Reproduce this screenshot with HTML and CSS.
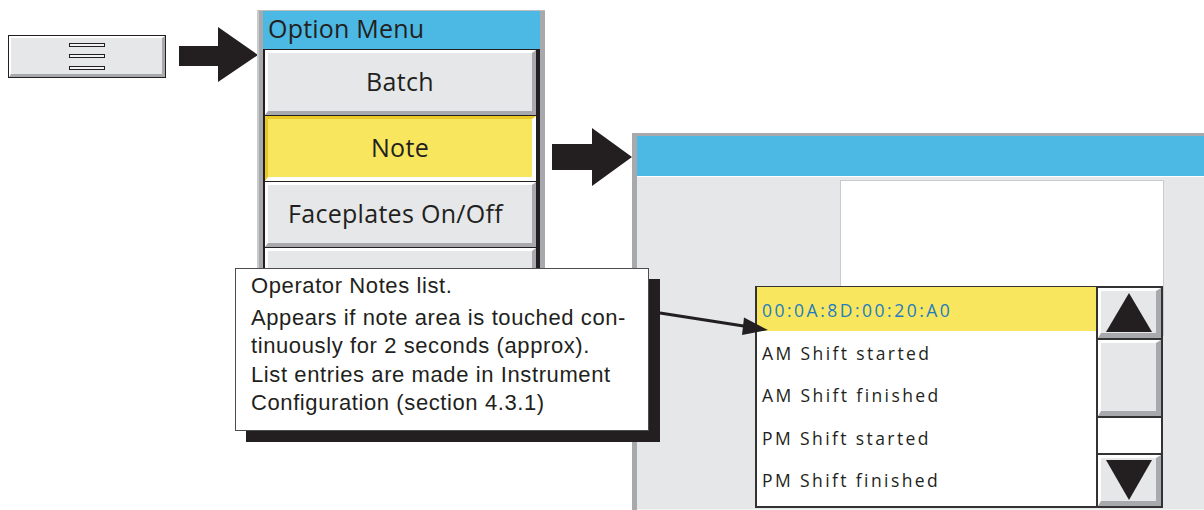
FILE: index.html
```html
<!DOCTYPE html>
<html lang="en">
<head>
<meta charset="utf-8">
<title>Operator Notes list</title>
<link rel="stylesheet" href="styles.css">
</head>
<body>
<div class="canvas">

  <div class="key">
    <div class="key-face">
      <span class="bar"></span><span class="bar"></span><span class="bar"></span>
    </div>
  </div>

  <svg class="arrow arrow-one" viewBox="0 0 79 55" aria-hidden="true">
    <polygon points="0,19 39,19 39,0 79,28 39,55 39,39 0,39"/>
  </svg>

  <div class="menu">
    <div class="menu-title">Option Menu</div>
    <div class="menu-list">
      <div class="menu-btn">Batch</div>
      <div class="menu-btn pressed">Note</div>
      <div class="menu-btn wide">Faceplates On/Off</div>
      <div class="menu-btn"></div>
    </div>
  </div>

  <svg class="arrow arrow-two" viewBox="0 0 80 58" aria-hidden="true">
    <polygon points="0,16 40,16 40,0 80,29 40,58 40,42 0,42"/>
  </svg>

  <div class="window">
    <div class="window-head"></div>
    <div class="window-body">
      <div class="note-area"></div>
      <div class="notes-list">
        <div class="notes-items">
          <div class="note-row selected">00:0A:8D:00:20:A0</div>
          <div class="note-row">AM Shift started</div>
          <div class="note-row">AM Shift finished</div>
          <div class="note-row">PM Shift started</div>
          <div class="note-row">PM Shift finished</div>
        </div>
        <div class="scroller">
          <div class="scroll-btn up">
            <svg viewBox="0 0 46 39"><polygon points="23,0 46,39 0,39"/></svg>
          </div>
          <div class="scroll-thumb"></div>
          <div class="scroll-track"></div>
          <div class="scroll-btn down">
            <svg viewBox="0 0 46 40"><polygon points="0,0 46,0 23,40"/></svg>
          </div>
        </div>
      </div>
    </div>
  </div>

  <div class="callout">
    <p class="callout-title">Operator Notes list.</p>
    <p>Appears if note area is touched con-</p>
    <p>tinuously for 2 seconds (approx).</p>
    <p>List entries are made in Instrument</p>
    <p>Configuration (section 4.3.1)</p>
  </div>

  <svg class="connector" viewBox="0 0 1204 510" aria-hidden="true">
    <line x1="660" y1="313" x2="750" y2="327" />
    <polygon points="768,330 744,317.5 742,335"/>
  </svg>

</div>
</body>
</html>
```

FILE: styles.css
```css
* { box-sizing: border-box; }

html, body {
  margin: 0;
  padding: 0;
  background: #ffffff;
}

.canvas {
  position: relative;
  width: 1204px;
  height: 510px;
  overflow: hidden;
  background: #ffffff;
  font-family: "Open Sans", "Noto Sans", sans-serif;
  color: #231f20;
}

/* ---------- left menu key ---------- */
.key {
  position: absolute;
  left: 8px;
  top: 35px;
  width: 158px;
  height: 43px;
  border: 1px solid #231f20;
}
.key-face {
  height: 100%;
  background: #e6e7e8;
  border-style: solid;
  border-width: 2px 3px 3px 2px;
  border-color: #ffffff #a7a9ac #a7a9ac #ffffff;
  display: flex;
  flex-direction: column;
  align-items: center;
  justify-content: center;
  gap: 7.5px;
}
.bar {
  display: block;
  width: 36px;
  height: 4px;
  border: 1px solid #231f20;
  background: #f2f2f2;
}

/* ---------- arrows ---------- */
.arrow {
  position: absolute;
  fill: #231f20;
}
.arrow-one {
  left: 179px;
  top: 27px;
  width: 79px;
  height: 55px;
}
.arrow-two {
  left: 552px;
  top: 128px;
  width: 80px;
  height: 58px;
}

/* ---------- option menu ---------- */
.menu {
  position: absolute;
  left: 257px;
  top: 10px;
  width: 288px;
  height: 275px;
  background: #a7a9ac;
  border-left: 2px solid #c9cacc;
  border-top: 1px solid #bcbec0;
  padding: 0 5px 0 4px;
  display: flex;
  flex-direction: column;
}
.menu-title {
  flex: none;
  height: 38px;
  background: #4cb8e4;
  font-size: 25px;
  line-height: 34px;
  padding-left: 5px;
  color: #231f20;
  letter-spacing: 0.2px;
}
.menu-list {
  flex: 1;
  min-height: 0;
  overflow: hidden;
  background: #231f20;
  padding: 1px 4px 0 2px;
  display: flex;
  flex-direction: column;
  gap: 1px;
}
.menu-btn {
  height: 65px;
  flex: none;
  background: #e6e7e8;
  border-style: solid;
  border-width: 3px 4px 4px 3px;
  border-color: #ffffff #a7a9ac #a7a9ac #ffffff;
  display: flex;
  align-items: center;
  justify-content: center;
  font-size: 25px;
  letter-spacing: 0.3px;
  padding-bottom: 2px;
}
.menu-btn.wide {
  padding-right: 9px;
}
.menu-btn.pressed {
  background: #f8e75e;
  border-color: #e9c925 #ffffff #ffffff #e9c925;
}

/* ---------- right window ---------- */
.window {
  position: absolute;
  left: 632px;
  top: 133px;
  width: 572px;
  height: 377px;
  border-top: 3px solid #a7a9ac;
  border-left: 5px solid #a7a9ac;
  background: #e6e7e8;
  display: flex;
  flex-direction: column;
}
.window-head {
  height: 41px;
  flex: none;
  background: #4cb8e4;
  border-bottom: 1px solid #ffffff;
}
.window-body {
  position: relative;
  flex: 1;
  padding: 3px 0 0 203px;
  border-bottom: 1px solid #f4f4f4;
}
.note-area {
  width: 324px;
  height: 156px;
  background: #ffffff;
  border: 1px solid #c9cacc;
}

/* ---------- notes list popup ---------- */
.notes-list {
  position: absolute;
  left: 118px;
  top: 109px;
  width: 408px;
  height: 222px;
  border: 2px solid #333333;
  background: #ffffff;
  display: flex;
}
.notes-items {
  flex: 1;
  display: flex;
  flex-direction: column;
}
.note-row {
  height: 42.5px;
  flex: none;
  padding: 3px 0 0 5px;
  line-height: 39.5px;
  font-size: 17.5px;
  letter-spacing: 2.4px;
  color: #231f20;
  white-space: nowrap;
}
.note-row.selected {
  background: #f8e75e;
  color: #1f7cc0;
  height: 43.5px;
  margin-top: -1px;
  padding-top: 4px;
  letter-spacing: 2.5px;
}

.scroller {
  width: 65px;
  flex: none;
  border-left: 2px solid #333333;
  background: #ffffff;
  display: flex;
  flex-direction: column;
}
.scroll-btn,
.scroll-thumb {
  background: #e6e7e8;
  border-style: solid;
  border-width: 3px 5px 5px 3px;
  border-color: #ffffff #a7a9ac #a7a9ac #ffffff;
  display: flex;
  align-items: center;
  justify-content: center;
  flex: none;
}
.scroll-btn.up {
  height: 50px;
  box-shadow: 0 2px 0 #333333;
  margin-bottom: 2px;
}
.scroll-thumb {
  height: 76px;
  box-shadow: 0 2px 0 #333333;
  margin-bottom: 2px;
}
.scroll-track {
  flex: 1;
  background: #ffffff;
  border-bottom: 2px solid #333333;
}
.scroll-btn.down {
  height: 51px;
}
.scroll-btn svg {
  fill: #231f20;
  display: block;
}
.scroll-btn.up svg {
  width: 46px;
  height: 39px;
}
.scroll-btn.down svg {
  width: 46px;
  height: 40px;
}

/* ---------- callout ---------- */
.callout {
  position: absolute;
  left: 235px;
  top: 268px;
  width: 414px;
  height: 163px;
  background: #ffffff;
  border: 1px solid #4d4d4f;
  box-shadow: 11px 11px 0 #231f20;
  padding: 3px 0 0 15px;
  font-family: "Liberation Sans", Arial, sans-serif;
  font-size: 22px;
  letter-spacing: 0.6px;
  line-height: 28.5px;
  color: #231f20;
}
.callout p {
  margin: 0;
  white-space: nowrap;
}
.callout .callout-title {
  margin-bottom: 3px;
}

/* ---------- connector ---------- */
.connector {
  position: absolute;
  left: 0;
  top: 0;
  width: 1204px;
  height: 510px;
  pointer-events: none;
}
.connector line {
  stroke: #231f20;
  stroke-width: 3;
}
.connector polygon {
  fill: #231f20;
}
```
